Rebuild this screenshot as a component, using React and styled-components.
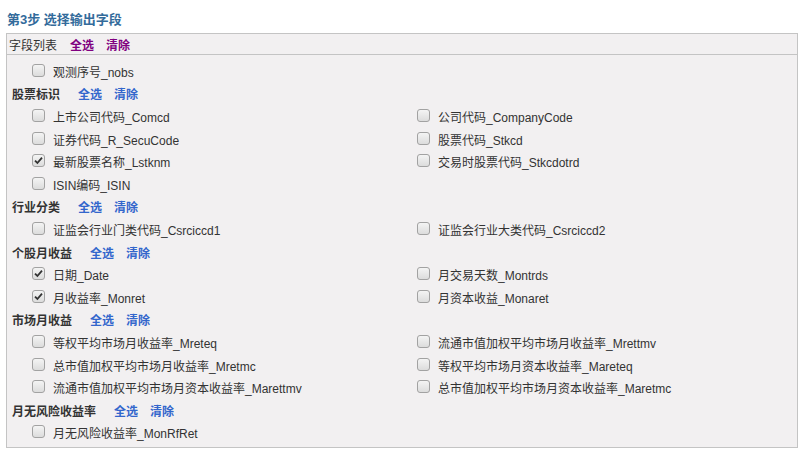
import React from 'react'
import styled, { createGlobalStyle } from 'styled-components'

const GlobalStyle = createGlobalStyle`
  body {
    margin: 0;
    background: #fff;
    font-family: "Liberation Sans", "Noto Sans CJK SC", sans-serif;
    font-size: 12px;
    color: #333;
  }
`

const Page = styled.div`
  padding: 10px 7px 0 6px;
`

const StepTitle = styled.div`
  font-size: 13px;
  font-weight: bold;
  line-height: 20px;
  color: #336b9b;
  padding-left: 1px;
  margin-bottom: 3px;
`

const Panel = styled.div`
  width: 790px;
  border: 1px solid #c4c4c4;
  background: #f2f0f1;
`

const PanelHeader = styled.div`
  display: flex;
  align-items: center;
  height: 20px;
  padding-left: 2px;
  border-bottom: 1px solid #c4c4c4;
  font-size: 12px;
`

const HeaderLink = styled.a`
  font-weight: bold;
  color: ${p => p.$purple ? '#800080' : '#3366cc'};
  margin-left: ${p => p.$first ? '13px' : '12px'};
  cursor: pointer;
  text-decoration: none;
`

const PanelBody = styled.div`
  padding: 5px 0 3px;
`

const GroupTitle = styled.div`
  display: flex;
  align-items: center;
  height: 22.6px;
  padding-left: 5px;
  font-weight: bold;
  font-size: 12px;
`

const GroupLink = styled(HeaderLink)`
  margin-left: ${p => p.$first ? '18px' : '12px'};
`

const ItemGrid = styled.div`
  display: grid;
  grid-template-columns: 385px 385px;
  padding-left: 25px;
`

const Item = styled.label`
  display: flex;
  align-items: center;
  height: 22.6px;
  font-size: 12px;
  color: #333;
`

const Box = styled.span`
  width: 13px;
  height: 13px;
  box-sizing: border-box;
  border: 1px solid #a2a2a2;
  border-radius: 3px;
  background: linear-gradient(#f4f4f4, #dcdcdc);
  margin-right: 8px;
  margin-top: -2px;
  display: flex;
  align-items: center;
  justify-content: center;
`

function Check({ checked }) {
  return (
    <Box>
      {checked && (
        <svg width="9" height="9" viewBox="0 0 9 9">
          <path d="M1 4.6 L3.4 7 L8 1.6" fill="none" stroke="#333" strokeWidth="1.8" />
        </svg>
      )}
    </Box>
  )
}

const groups = [
  {
    title: null,
    items: [['观测序号_nobs', false]],
  },
  {
    title: '股票标识',
    items: [
      ['上市公司代码_Comcd', false],
      ['公司代码_CompanyCode', false],
      ['证券代码_R_SecuCode', false],
      ['股票代码_Stkcd', false],
      ['最新股票名称_Lstknm', true],
      ['交易时股票代码_Stkcdotrd', false],
      ['ISIN编码_ISIN', false],
    ],
  },
  {
    title: '行业分类',
    items: [
      ['证监会行业门类代码_Csrciccd1', false],
      ['证监会行业大类代码_Csrciccd2', false],
    ],
  },
  {
    title: '个股月收益',
    items: [
      ['日期_Date', true],
      ['月交易天数_Montrds', false],
      ['月收益率_Monret', true],
      ['月资本收益_Monaret', false],
    ],
  },
  {
    title: '市场月收益',
    items: [
      ['等权平均市场月收益率_Mreteq', false],
      ['流通市值加权平均市场月收益率_Mrettmv', false],
      ['总市值加权平均市场月收益率_Mretmc', false],
      ['等权平均市场月资本收益率_Mareteq', false],
      ['流通市值加权平均市场月资本收益率_Marettmv', false],
      ['总市值加权平均市场月资本收益率_Maretmc', false],
    ],
  },
  {
    title: '月无风险收益率',
    items: [['月无风险收益率_MonRfRet', false]],
  },
]

export default function App() {
  return (
    <Page>
      <GlobalStyle />
      <StepTitle>第3步 选择输出字段</StepTitle>
      <Panel>
        <PanelHeader>
          字段列表
          <HeaderLink $purple $first>全选</HeaderLink>
          <HeaderLink $purple>清除</HeaderLink>
        </PanelHeader>
        <PanelBody>
          {groups.map((g, i) => (
            <div key={i}>
              {g.title && (
                <GroupTitle>
                  {g.title}
                  <GroupLink $first>全选</GroupLink>
                  <GroupLink>清除</GroupLink>
                </GroupTitle>
              )}
              <ItemGrid>
                {g.items.map(([name, checked]) => (
                  <Item key={name}>
                    <Check checked={checked} />
                    {name}
                  </Item>
                ))}
              </ItemGrid>
            </div>
          ))}
        </PanelBody>
      </Panel>
    </Page>
  )
}
